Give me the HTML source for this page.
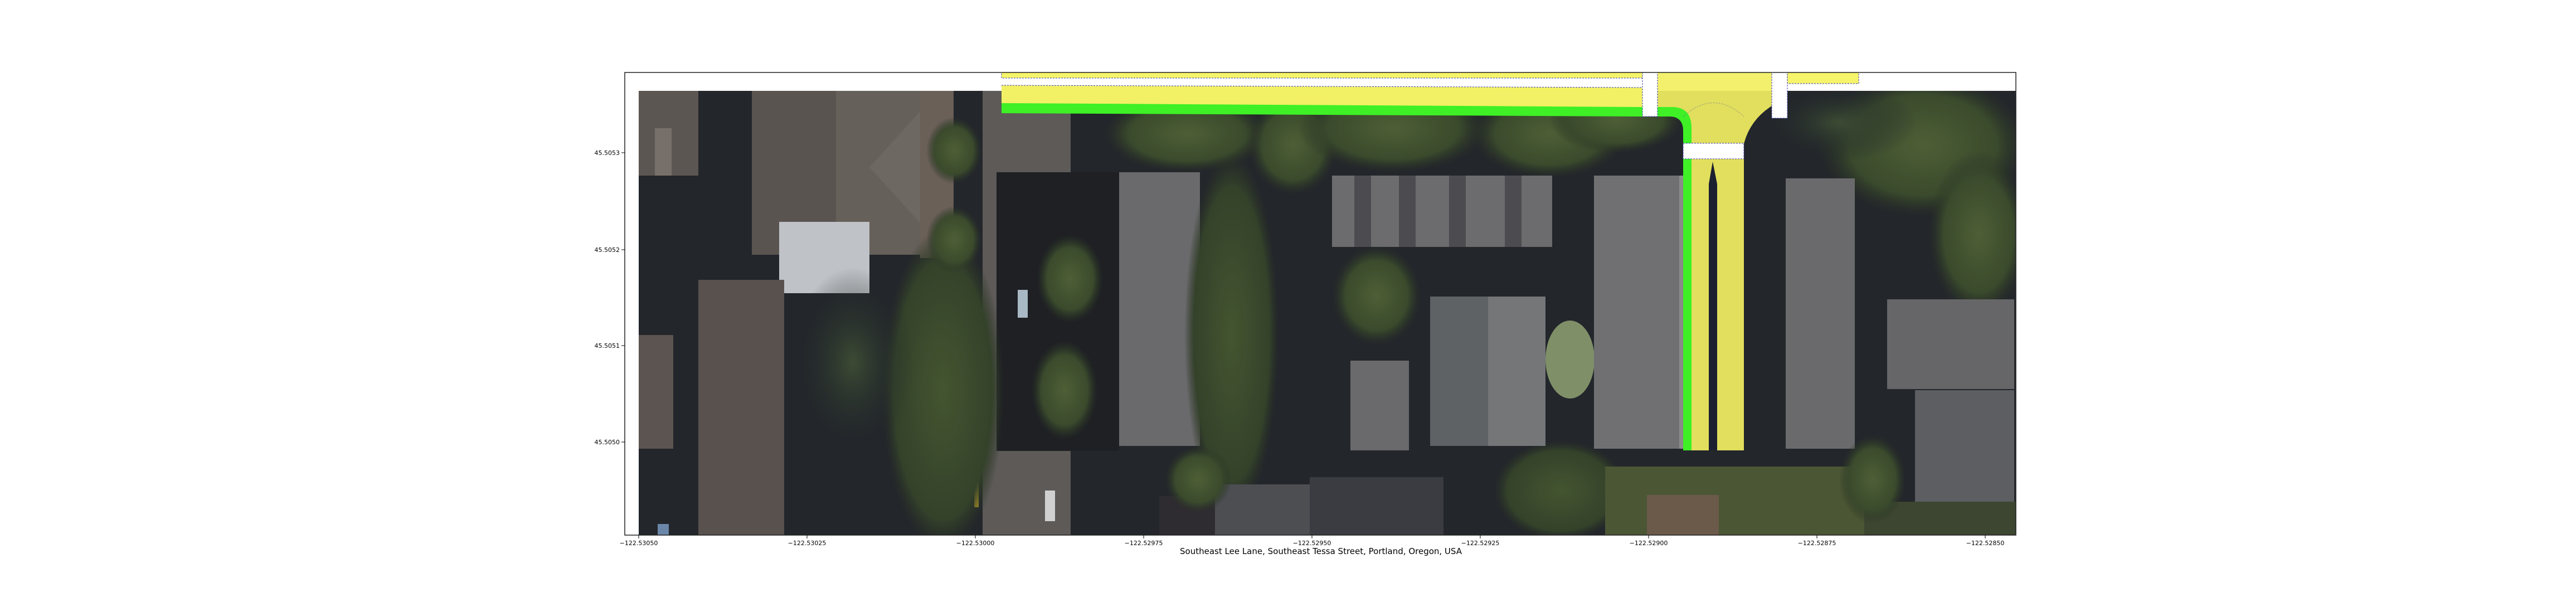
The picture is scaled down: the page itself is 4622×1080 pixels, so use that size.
<!DOCTYPE html>
<html><head><meta charset="utf-8"><style>
html,body{margin:0;padding:0;background:#fff;width:4622px;height:1080px;overflow:hidden}
svg{display:block}
text{font-family:"DejaVu Sans","Liberation Sans",sans-serif;fill:#000}
</style></head><body>
<svg width="4622" height="1080" viewBox="0 0 4622 1080" xmlns="http://www.w3.org/2000/svg">
<defs>
<radialGradient id="tr" cx="50%" cy="50%" r="50%"><stop offset="0" stop-color="#4e5f36"/><stop offset="0.7" stop-color="#3a4a2c"/><stop offset="1" stop-color="#2a3324" stop-opacity="0"/></radialGradient>
<radialGradient id="tr2" cx="50%" cy="50%" r="50%"><stop offset="0" stop-color="#3d4c34"/><stop offset="1" stop-color="#1e2528" stop-opacity="0"/></radialGradient>
<radialGradient id="tr3" cx="50%" cy="50%" r="50%"><stop offset="0" stop-color="#445530"/><stop offset="0.8" stop-color="#34422a"/><stop offset="1" stop-color="#2a3324" stop-opacity="0"/></radialGradient>
<clipPath id="img"><rect x="1146" y="163" width="2471" height="797"/></clipPath>
</defs>
<rect width="4622" height="1080" fill="#fff"/>
<g clip-path="url(#img)">
<rect x="1146" y="163" width="2471" height="797" fill="#23262b"/>
<rect x="1146" y="163" width="107" height="152" fill="#5c5652"/>
<rect x="1175" y="230" width="30" height="85" fill="#77706a"/>
<rect x="1349" y="163" width="302" height="294" fill="#5a5450"/>
<rect x="1500" y="163" width="151" height="294" fill="#66605a"/>
<polygon points="1560,300 1651,200 1651,400" fill="#6e6862"/>
<rect x="1651" y="163" width="60" height="300" fill="#6a6058"/>
<rect x="1398" y="398" width="162" height="128" fill="#bfc2c6"/>
<rect x="1253" y="502" width="154" height="458" fill="#58514d"/>
<rect x="1146" y="601" width="62" height="204" fill="#5c5450"/>
<rect x="1180" y="940" width="20" height="20" fill="#6a86a8"/>
<rect x="1763" y="163" width="158" height="797" fill="#5d5a58"/>
<rect x="1788" y="309" width="220" height="500" fill="#1e2024"/>
<rect x="1826" y="520" width="18" height="50" fill="#a8b8c4"/>
<rect x="1875" y="880" width="18" height="55" fill="#d0d0d0"/>
<rect x="1748" y="860" width="8" height="50" fill="#c9a92a"/>
<ellipse cx="1692" cy="700" rx="110" ry="290" fill="url(#tr3)"/>
<ellipse cx="1712" cy="270" rx="50" ry="60" fill="url(#tr)"/>
<ellipse cx="1712" cy="430" rx="50" ry="60" fill="url(#tr)"/>
<ellipse cx="1920" cy="500" rx="60" ry="80" fill="url(#tr)"/>
<ellipse cx="1910" cy="700" rx="60" ry="90" fill="url(#tr)"/>
<ellipse cx="1530" cy="650" rx="110" ry="170" fill="url(#tr2)"/>
<rect x="2008" y="309" width="145" height="491" fill="#6a6a6c"/>
<ellipse cx="2210" cy="600" rx="85" ry="330" fill="url(#tr3)"/>
<ellipse cx="2130" cy="240" rx="150" ry="70" fill="url(#tr)"/>
<ellipse cx="2320" cy="260" rx="80" ry="90" fill="url(#tr)"/>
<rect x="2178" y="869" width="222" height="91" fill="#4c4e52"/>
<rect x="2080" y="890" width="100" height="70" fill="#2e2c30"/>
<ellipse cx="2150" cy="860" rx="60" ry="60" fill="url(#tr)"/>
<ellipse cx="2500" cy="230" rx="170" ry="80" fill="url(#tr)"/>
<ellipse cx="2780" cy="240" rx="140" ry="80" fill="url(#tr)"/>
<ellipse cx="2900" cy="215" rx="120" ry="60" fill="url(#tr)"/>
<ellipse cx="3450" cy="260" rx="190" ry="130" fill="url(#tr)"/>
<ellipse cx="3550" cy="420" rx="90" ry="150" fill="url(#tr)"/>
<ellipse cx="3300" cy="220" rx="140" ry="70" fill="url(#tr2)"/>
<ellipse cx="2800" cy="880" rx="120" ry="90" fill="url(#tr3)"/>
<rect x="2390" y="315" width="395" height="128" fill="#6c6c6e"/>
<rect x="2430" y="315" width="30" height="128" fill="#4c4c50"/>
<rect x="2510" y="315" width="30" height="128" fill="#4c4c50"/>
<rect x="2600" y="315" width="30" height="128" fill="#4c4c50"/>
<rect x="2700" y="315" width="30" height="128" fill="#4c4c50"/>
<ellipse cx="2470" cy="530" rx="80" ry="90" fill="url(#tr)"/>
<rect x="2566" y="532" width="207" height="268" fill="#5e6264"/>
<rect x="2670" y="532" width="103" height="268" fill="#747678"/>
<rect x="2423" y="647" width="105" height="161" fill="#6a6a6c"/>
<ellipse cx="2817" cy="645" rx="44" ry="70" fill="#7f8f68"/>
<rect x="2860" y="315" width="153" height="490" fill="#707072"/>
<rect x="3013" y="315" width="7" height="490" fill="#8a8a8a"/>
<rect x="3204" y="320" width="124" height="485" fill="#6a6a6c"/>
<rect x="3386" y="537" width="228" height="161" fill="#666668"/>
<rect x="3436" y="700" width="178" height="207" fill="#5c5e62"/>
<rect x="2350" y="856" width="240" height="104" fill="#3a3c42"/>
<rect x="2880" y="837" width="465" height="123" fill="#4b5634"/>
<rect x="2955" y="888" width="129" height="72" fill="#6b5a4a"/>
<rect x="3345" y="900" width="272" height="60" fill="#3c4630"/>
<ellipse cx="3360" cy="860" rx="60" ry="80" fill="url(#tr)"/>
</g>
<g stroke="#3b3bb0" stroke-width="1" stroke-dasharray="3,2">
<rect x="1797" y="130" width="1150" height="10" fill="#f6f46a"/>
<path d="M1797 153 L2947 157 L2947 192 L1797 192 Z" fill="#f2f065" stroke="none"/>
<path d="M1797 185 L2947 192 L2947 209 L1797 203 Z" fill="#3ef025" stroke="none"/>
<path d="M1797 153 L2947 157" fill="none"/>
<path d="M2974 130 L3179 130 L3179 190 Q3140 215 3129 258 L3129 808 L3035 808 L3035 240 Q3035 209 3000 209 L2974 209 Z" fill="#f2ef62" fill-opacity="0.92" stroke="none"/>
<path d="M2974 192 L3000 192 Q3035 192 3035 230 L3035 808 L3020 808 L3020 235 Q3020 209 2995 209 L2974 209 Z" fill="#3ef025" stroke="none"/>
<rect x="3207" y="130" width="128" height="20" fill="#f6f46a"/>
<rect x="2947" y="130" width="27" height="79" fill="#fff"/>
<rect x="3179" y="130" width="28" height="82" fill="#fff"/>
<rect x="3020" y="257" width="109" height="28" fill="#fff"/>
<path d="M3073 290 L3066 330 L3066 808 L3081 808 L3081 330 Z" fill="#1c2030" stroke="none"/>
<path d="M3020 209 Q3075 160 3129 209" fill="none" stroke-opacity="0.4"/>
</g>
<rect x="1121" y="130" width="2496" height="830" fill="none" stroke="#222" stroke-width="1.5"/>
<g stroke="#000" stroke-width="1">
<line x1="1115" y1="274" x2="1121" y2="274"/><line x1="1115" y1="448" x2="1121" y2="448"/>
<line x1="1115" y1="620" x2="1121" y2="620"/><line x1="1115" y1="793" x2="1121" y2="793"/>
<line x1="1146" y1="960" x2="1146" y2="966"/><line x1="1448" y1="960" x2="1448" y2="966"/>
<line x1="1750" y1="960" x2="1750" y2="966"/><line x1="2052" y1="960" x2="2052" y2="966"/>
<line x1="2354" y1="960" x2="2354" y2="966"/><line x1="2656" y1="960" x2="2656" y2="966"/>
<line x1="2958" y1="960" x2="2958" y2="966"/><line x1="3260" y1="960" x2="3260" y2="966"/>
<line x1="3562" y1="960" x2="3562" y2="966"/>
</g>
<g font-size="11" text-anchor="end">
<text x="1112" y="278">45.5053</text><text x="1112" y="452">45.5052</text>
<text x="1112" y="624">45.5051</text><text x="1112" y="797">45.5050</text>
</g>
<g font-size="11" text-anchor="middle">
<text x="1146" y="978">−122.53050</text><text x="1448" y="978">−122.53025</text>
<text x="1750" y="978">−122.53000</text><text x="2052" y="978">−122.52975</text>
<text x="2354" y="978">−122.52950</text><text x="2656" y="978">−122.52925</text>
<text x="2958" y="978">−122.52900</text><text x="3260" y="978">−122.52875</text>
<text x="3562" y="978">−122.52850</text>
</g>
<text x="2370" y="994" font-size="15" text-anchor="middle">Southeast Lee Lane, Southeast Tessa Street, Portland, Oregon, USA</text>
</svg>
</body></html>
